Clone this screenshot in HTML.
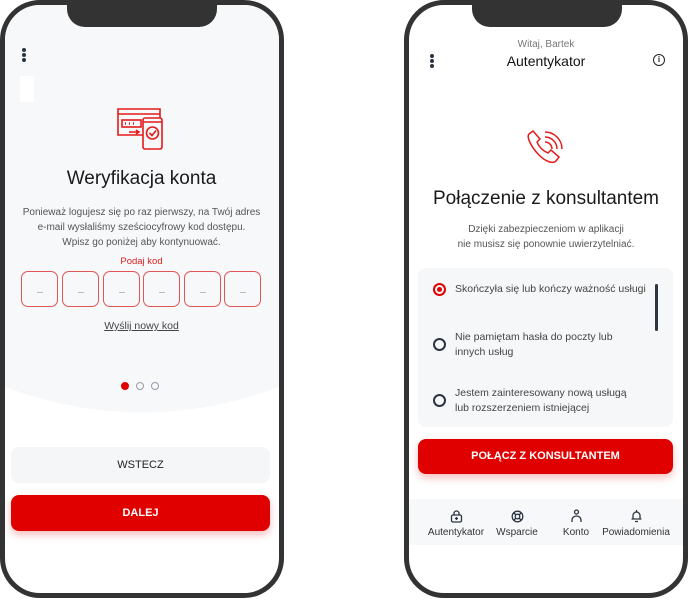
<!DOCTYPE html>
<html><head><meta charset="utf-8"><style>
*{margin:0;padding:0;box-sizing:border-box}
body{width:688px;height:600px;background:#fff;position:relative;overflow:hidden;font-family:"Liberation Sans",sans-serif;color:#222}
.ph{position:absolute;top:0;height:598px;border:5px solid #333;border-radius:40px;overflow:hidden}
.notch{position:absolute;top:-5px;width:150px;height:32px;background:#333;border-radius:0 0 18px 18px}
.a{position:absolute}
.c{position:absolute;text-align:center}
.box{position:absolute;top:271px;width:37px;height:36px;border:1.5px solid #e05555;border-radius:7px}
.box:after{content:"";position:absolute;left:15px;top:20px;width:6px;height:1px;background:#bbb}
.rad{position:absolute;left:433px;width:13px;height:13px;border:2px solid #2b3440;border-radius:50%}
.opt{position:absolute;left:455px;font-size:10.5px;color:#444;line-height:15px}
.nl{position:absolute;top:527px;font-size:10px;color:#333;text-align:center;width:80px}
</style></head><body>
<!-- LEFT PHONE -->
<div class="ph" style="left:0;width:284px;background:#fff">
  <svg class="a" style="left:-5px;top:-5px" width="284" height="440"><path d="M0 0H284V385Q142 440 0 385Z" fill="#f7f8fa"/></svg>
</div>
<div class="notch" style="left:67px;top:0;height:27px"></div>
<div class="a" style="left:22px;top:48px;width:4px;height:4px;border-radius:50%;background:#2b3440;box-shadow:0 5px 0 #2b3440,0 10px 0 #2b3440"></div>
<div class="a" style="left:20px;top:76px;width:14px;height:26px;background:#fff"></div>
<svg class="a" style="left:115px;top:106px" width="50" height="46" viewBox="0 0 50 46" fill="none" stroke="#e41b1b" stroke-width="1.6">
<path d="M28 29H3V3h42v9"/><path d="M3 8h42"/><rect x="7" y="14" width="19" height="7"/><path d="M10 17.5h1M14 17.5h1M18 17.5h1" stroke-width="2.5"/><path d="M14 26h10M21 24l3 2-3 2"/>
<rect x="28" y="12" width="19" height="31" rx="2"/><circle cx="37.5" cy="27" r="6"/><path d="M34.5 27l2.5 2.5 4-5"/><path d="M28 16h19"/>
</svg>
<div class="c" style="left:0;width:283px;top:168px;font-size:19px;color:#1a1a1a">Weryfikacja konta</div>
<div class="c" style="left:0;width:283px;top:205px;font-size:10px;line-height:15px;color:#555">Ponieważ logujesz się po raz pierwszy, na Twój adres<br>e-mail wysłaliśmy sześciocyfrowy kod dostępu.<br>Wpisz go poniżej aby kontynuować.</div>
<div class="c" style="left:0;width:283px;top:256px;font-size:9.5px;color:#e02020">Podaj kod</div>
<div class="box" style="left:21px"></div><div class="box" style="left:62px"></div><div class="box" style="left:103px"></div><div class="box" style="left:143px"></div><div class="box" style="left:184px"></div><div class="box" style="left:224px"></div>
<div class="c" style="left:0;width:283px;top:320px;font-size:10.5px;color:#444;text-decoration:underline">Wyślij nowy kod</div>
<div class="a" style="left:121px;top:382px;width:8px;height:8px;border-radius:50%;background:#e00000"></div>
<div class="a" style="left:136px;top:382px;width:8px;height:8px;border-radius:50%;border:1px solid #99a"></div>
<div class="a" style="left:151px;top:382px;width:8px;height:8px;border-radius:50%;border:1px solid #99a"></div>
<div class="c" style="left:11px;width:259px;top:447px;height:36px;line-height:36px;background:#f5f6f8;border-radius:8px;font-size:11px;color:#222">WSTECZ</div>
<div class="c" style="left:11px;width:259px;top:495px;height:36px;line-height:36px;background:#e00000;border-radius:8px;font-size:11px;color:#fff;font-weight:bold;box-shadow:0 4px 8px rgba(224,0,0,.25)">DALEJ</div>

<!-- RIGHT PHONE -->
<div class="ph" style="left:404px;width:284px;background:#fff"></div>
<div class="notch" style="left:472px;top:0;height:27px"></div>
<div class="c" style="left:404px;width:284px;top:39px;font-size:10px;color:#777">Witaj, Bartek</div>
<div class="c" style="left:404px;width:284px;top:53px;font-size:14px;color:#111">Autentykator</div>
<div class="a" style="left:430px;top:54px;width:4px;height:4px;border-radius:50%;background:#2b3440;box-shadow:0 5px 0 #2b3440,0 10px 0 #2b3440"></div>
<div class="a" style="left:653px;top:54px;width:12px;height:12px;border:1.5px solid #222;border-radius:50%;font-size:8px;line-height:9px;text-align:center;font-weight:bold">i</div>
<svg class="a" style="left:521px;top:126px" width="48" height="48" viewBox="0 0 48 48" fill="none" stroke="#e41b1b" stroke-width="1.5">
<path d="M8 8l4-3 7 8-3 3c2 5 6 9 11 11l3-3 8 7-3 4c-3 3-10 1-17-6S5 11 8 8z"/><path d="M24 6a17 17 0 0 1 17 17M24 11a12 12 0 0 1 12 12M24 16a7 7 0 0 1 7 7"/>
</svg>
<div class="c" style="left:404px;width:284px;top:188px;font-size:19px;color:#1a1a1a">Połączenie z konsultantem</div>
<div class="c" style="left:404px;width:284px;top:222px;font-size:10px;line-height:15px;color:#555">Dzięki zabezpieczeniom w aplikacji<br>nie musisz się ponownie uwierzytelniać.</div>
<div class="a" style="left:418px;top:268px;width:255px;height:159px;background:#f6f7f9;border-radius:8px"></div>
<div class="a" style="left:655px;top:284px;width:3px;height:47px;background:#2b3440;border-radius:2px"></div>
<div class="rad" style="top:283px;border-color:#e00000"><div style="width:5px;height:5px;margin:2px;background:#e00000;border-radius:50%"></div></div>
<div class="opt" style="top:282px">Skończyła się lub kończy ważność usługi</div>
<div class="rad" style="top:338px"></div>
<div class="opt" style="top:330px">Nie pamiętam hasła do poczty lub<br>innych usług</div>
<div class="rad" style="top:394px"></div>
<div class="opt" style="top:386px">Jestem zainteresowany nową usługą<br>lub rozszerzeniem istniejącej</div>
<div class="c" style="left:418px;width:255px;top:439px;height:35px;line-height:35px;background:#e00000;border-radius:8px;font-size:11px;color:#fff;font-weight:bold;box-shadow:0 4px 8px rgba(224,0,0,.25)">POŁĄCZ Z KONSULTANTEM</div>
<div class="a" style="left:409px;top:499px;width:274px;height:46px;background:#f7f8fa"></div>
<svg class="a" style="left:450px;top:510px" width="13" height="13" viewBox="0 0 13 13" fill="none" stroke="#2b3440" stroke-width="1.3"><rect x="1.5" y="5" width="10" height="7" rx="1.5"/><path d="M4 5V3.5a2.5 2.5 0 0 1 5 0V5M6.5 7v3M5 8.5h3"/></svg>
<svg class="a" style="left:511px;top:510px" width="13" height="13" viewBox="0 0 13 13" fill="none" stroke="#2b3440" stroke-width="1.3"><circle cx="6.5" cy="6.5" r="5.3"/><circle cx="6.5" cy="6.5" r="2.3"/><path d="M3 3l2 2M10 3L8 5M3 10l2-2M10 10L8 8"/></svg>
<svg class="a" style="left:570px;top:509px" width="13" height="14" viewBox="0 0 13 14" fill="none" stroke="#2b3440" stroke-width="1.3"><circle cx="6.5" cy="3" r="2"/><path d="M2 13v-2a4.5 4 0 0 1 9 0v2"/></svg>
<svg class="a" style="left:630px;top:509px" width="13" height="14" viewBox="0 0 13 14" fill="none" stroke="#2b3440" stroke-width="1.3"><path d="M6.5 1v1.5M3 10V6.5a3.5 3.5 0 0 1 7 0V10M1.5 10h10M5 12.5h3"/></svg>
<div class="nl" style="left:416px">Autentykator</div>
<div class="nl" style="left:477px">Wsparcie</div>
<div class="nl" style="left:536px">Konto</div>
<div class="nl" style="left:596px">Powiadomienia</div>
</body></html>
